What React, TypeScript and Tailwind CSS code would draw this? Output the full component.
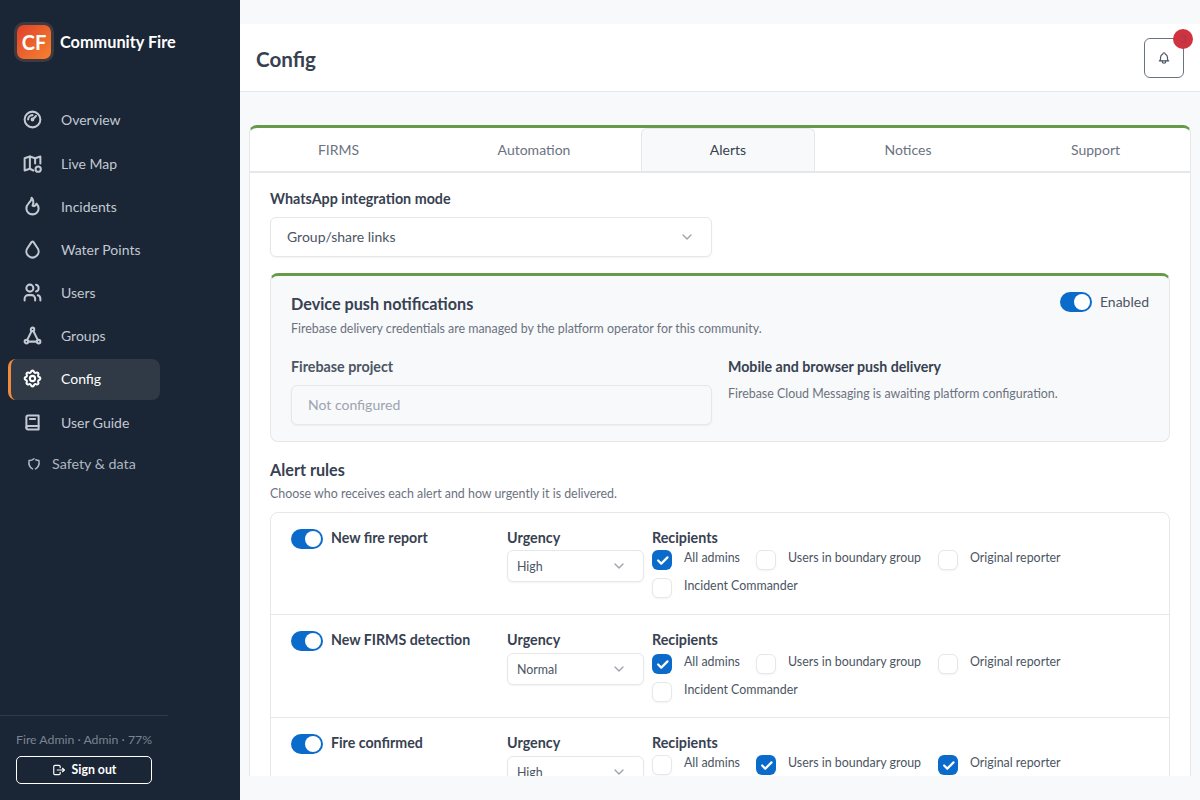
import React from "react";
import { TbGauge, TbFlame, TbDroplet, TbUsers, TbSettings, TbBook2, TbLogout, TbBell, TbChevronDown, TbCheck } from "react-icons/tb";

type IconProps = { className?: string; strokeWidth?: number };

const Triangle = ({ className }: IconProps) => (
  <svg viewBox="0 0 24 24" fill="none" stroke="currentColor" strokeWidth="2.3" strokeLinecap="round" strokeLinejoin="round" className={className}>
    <circle cx="12" cy="5" r="2" />
    <circle cx="5" cy="19" r="2" />
    <circle cx="19" cy="19" r="2" />
    <path d="M7 19h10M6 17l5-10.2M18 17l-5-10.2" />
  </svg>
);

const MapBadge = ({ className }: IconProps) => (
  <svg viewBox="0 0 24 24" fill="none" stroke="currentColor" strokeWidth="2.3" strokeLinecap="round" strokeLinejoin="round" className={className}>
    <path d="M13 20l-4-2-6 2V6l6-2 6 2 6-2v8" />
    <path d="M9 4v14M15 6v6" />
    <circle cx="18.5" cy="18.5" r="3" />
  </svg>
);

const OpenShield = ({ className }: IconProps) => (
  <svg viewBox="0 0 24 24" fill="none" stroke="currentColor" strokeWidth="2.6" strokeLinecap="round" strokeLinejoin="round" className={className}>
    <path d="M15 4.8a12 12 0 0 0 5.5 1.2c1 6.5-1.5 12-6 14.500M9.500 20.500c-4.500-2.500-7-8-6-14.500a12 12 0 0 0 8.500-3" />
  </svg>
);

const nav = [
  { label: "Overview", Icon: TbGauge, h: "h-[46px]" },
  { label: "Live Map", Icon: MapBadge, h: "h-[43px]" },
  { label: "Incidents", Icon: TbFlame, h: "h-[43px]" },
  { label: "Water Points", Icon: TbDroplet, h: "h-[43px]" },
  { label: "Users", Icon: TbUsers, h: "h-[43px]" },
  { label: "Groups", Icon: Triangle, h: "h-[43px]" },
];

const tabs = [
  { t: "FIRMS", w: "w-[177px]" },
  { t: "Automation", w: "w-[214px]" },
  { t: "Alerts", w: "w-[174px]" },
  { t: "Notices", w: "w-[186px]" },
  { t: "Support", w: "w-[189px]" },
];

function Toggle({ cls = "" }: { cls?: string }) {
  return (
    <span className={`flex h-[20px] w-[32px] shrink-0 items-center justify-end rounded-full bg-[#0b6bcb] pr-[2px] ${cls}`}>
      <span className="h-[16px] w-[16px] rounded-full bg-white" />
    </span>
  );
}

function Check({ on, label, w }: { on?: boolean; label: string; w: string }) {
  return (
    <div className={`flex items-start gap-[12px] ${w}`}>
      <span className={`flex h-[20px] w-[20px] shrink-0 items-center justify-center rounded-[6px] ${on ? "bg-[#0b6bcb]" : "border border-[#e5e7eb] bg-white shadow-[0_1px_2px_rgba(0,0,0,0.05)]"}`}>
        {on && <TbCheck className="h-[15px] w-[15px] text-white" strokeWidth={3.5} />}
      </span>
      <span className="text-[12.4px] leading-[16px] text-[#4b5563]">{label}</span>
    </div>
  );
}

function Select({ value, h, w, text, pad }: { value: string; h: string; w: string; text: string; pad: string }) {
  return (
    <div className={`flex items-center justify-between rounded-[6px] border border-[#e5e7eb] bg-white shadow-[0_1px_2px_rgba(0,0,0,0.05)] ${h} ${w} ${pad}`}>
      <span className={`${text} text-[#4b5563]`}>{value}</span>
      <TbChevronDown className="h-[16px] w-[16px] text-[#9ca3af]" />
    </div>
  );
}

function Rule({ title, urgency, checks, cls, selCls, chkCls, last }: { title: string; urgency: string; checks: boolean[]; cls: string; selCls: string; chkCls: string; last?: boolean }) {
  return (
    <div className={`flex pl-[20px] ${cls} ${last ? "" : "border-b border-[#e5e7eb]"}`}>
      <div className="flex w-[216px] shrink-0 items-start gap-[8px]">
        <Toggle />
        <span className="text-[14.2px] font-bold leading-[18px] text-[#374151]">{title}</span>
      </div>
      <div className="w-[145px] shrink-0">
        <div className="text-[14.3px] font-bold leading-[18px] text-[#374151]">Urgency</div>
        <Select value={urgency} h="h-[32px]" w={`w-[137px] ${selCls}`} text="pt-[2px] text-[12.4px]" pad="pl-[9px] pr-[16px]" />
      </div>
      <div className="flex-1">
        <div className="text-[14.3px] font-bold leading-[18px] text-[#374151]">Recipients</div>
        <div className={`flex flex-wrap gap-y-[8px] ${chkCls}`}>
          <Check on={checks[0]} label="All admins" w="w-[104px]" />
          <Check on={checks[1]} label="Users in boundary group" w="w-[182px]" />
          <Check on={checks[2]} label="Original reporter" w="w-[150px]" />
          <Check on={checks[3]} label="Incident Commander" w="w-[200px]" />
        </div>
      </div>
    </div>
  );
}

export default function App() {
  return (
    <div className="flex h-[800px] w-[1200px] overflow-hidden bg-[#f8f9fb] font-['Lato','Noto_Sans',sans-serif]">
      <aside className="flex h-full w-[240px] shrink-0 flex-col bg-[#1a2535]">
        <div className="flex items-center gap-[6px] pl-[14px] pt-[22px]">
          <div className="flex h-[40px] w-[40px] items-center justify-center rounded-[10px] border-[3px] border-[#3d3a40] bg-gradient-to-br from-[#df3f2b] to-[#f5812f] text-[20px] font-bold text-white">CF</div>
          <span className="text-[16.3px] font-bold text-white">Community Fire</span>
        </div>
        <nav className="mt-[34px] w-[160px] pl-[8px]">
          {nav.map(({ label, Icon, h }) => (
            <div key={label} className={`flex items-center pl-[14px] text-[14px] text-[#c2c9d2] ${h}`}>
              <Icon className="h-[21px] w-[21px] shrink-0" strokeWidth={2.3} />
              <span className="ml-[18px]">{label}</span>
            </div>
          ))}
          <div className="mt-[2px] flex h-[41px] items-center rounded-[8px] border-l-[3px] border-[#f08a3c] bg-[#2f3a46] pb-[2px] pl-[11px] text-[14px] text-white">
            <TbSettings className="h-[21px] w-[21px] shrink-0" strokeWidth={2.3} />
            <span className="ml-[18px]">Config</span>
          </div>
          <div className="flex h-[45px] items-center pl-[14px] text-[14px] text-[#c2c9d2]">
            <TbBook2 className="h-[21px] w-[21px] shrink-0" strokeWidth={2.3} />
            <span className="ml-[18px]">User Guide</span>
          </div>
          <div className="flex h-[40px] items-center pb-[2px] pl-[19px] text-[14.3px] text-[#aeb6c0]">
            <OpenShield className="h-[14px] w-[14px] shrink-0" />
            <span className="ml-[11px]">Safety &amp; data</span>
          </div>
        </nav>
        <div className="mt-auto w-[168px] border-t border-[#2f3a48] pb-[16px] pl-[16px] pt-[16px]">
          <div className="text-[12.3px] leading-[16px] text-[#7b8491]">Fire Admin · Admin · 77%</div>
          <div className="mt-[8px] flex h-[28px] w-[136px] items-center justify-center gap-[6px] rounded-[5px] border border-white text-[12.3px] font-bold text-white">
            <TbLogout className="h-[14px] w-[14px]" />
            Sign out
          </div>
        </div>
      </aside>

      <main className="flex h-full min-w-0 flex-1 flex-col py-[24px]">
        <header className="flex h-[68px] shrink-0 items-center justify-between border-b border-[#e5e7eb] bg-white pl-[16px] pr-[16px]">
          <h1 className="pt-[3px] text-[20.6px] font-bold text-[#374151]">Config</h1>
          <div className="relative flex h-[40px] w-[40px] items-center justify-center rounded-[6px] border border-[#6b7280]">
            <TbBell className="h-[14px] w-[14px] text-[#4b5563]" />
            <span className="absolute right-[-10px] top-[-10px] flex h-[20px] w-[20px] items-center justify-center rounded-full bg-[#d0323f] text-[12px] text-[#9a4050]">3</span>
          </div>
        </header>
        <div className="min-h-0 flex-1 overflow-hidden pl-[9px] pr-[9px] pt-[33px]">
          <section className="rounded-[8px] border border-t-[3px] border-[#e5e7eb] border-t-[#659a4a] bg-white">
            <div className="flex h-[45px] border-b-[2px] border-[#e5e7eb]">
              {tabs.map(({ t, w }) => (
                <div key={t} className={`flex shrink-0 items-center justify-center text-[14px] ${w} ${t === "Alerts" ? "rounded-t-[6px] border-x border-t border-[#e5e7eb] bg-[#f8f9fa] pb-[1px] text-[#374151]" : "text-[#6b7280]"}`}>{t}</div>
              ))}
            </div>
            <div className="px-[20px] pt-[16px]">
              <label className="block text-[14.3px] font-bold leading-[20px] text-[#374151]">WhatsApp integration mode</label>
              <Select value="Group/share links" h="h-[40px]" w="w-[442px] mt-[8px]" text="text-[14px] pb-[1px]" pad="pl-[16px] pr-[16px]" />
              <div className="mt-[16px] h-[169px] rounded-[8px] border border-t-[3px] border-[#e5e7eb] border-t-[#659a4a] bg-[#f8f9fa] px-[20px] pt-[17px]">
                <div className="flex items-start justify-between">
                  <div>
                    <div className="text-[16.2px] font-bold leading-[22px] text-[#374151]">Device push notifications</div>
                    <div className="mt-[6px] text-[12.4px] leading-[16px] text-[#6b7280]">Firebase delivery credentials are managed by the platform operator for this community.</div>
                  </div>
                  <div className="-mt-[2px] flex items-center gap-[8px]">
                    <Toggle />
                    <span className="text-[14px] text-[#4b5563]">Enabled</span>
                  </div>
                </div>
                <div className="mt-[20px] flex">
                  <div className="w-[421px]">
                    <div className="text-[14.3px] font-bold leading-[20px] text-[#4b5563]">Firebase project</div>
                    <div className="mt-[8px] flex h-[40px] items-center rounded-[6px] border border-[#e5e7eb] bg-[#f8f9fa] pb-[1px] pl-[16px] text-[14px] text-[#9ca3af] shadow-[0_1px_2px_rgba(0,0,0,0.05)]">Not configured</div>
                  </div>
                  <div className="ml-[16px]">
                    <div className="text-[14.2px] font-bold leading-[20px] text-[#374151]">Mobile and browser push delivery</div>
                    <div className="mt-[9px] text-[12.4px] leading-[16px] text-[#6b7280]">Firebase Cloud Messaging is awaiting platform configuration.</div>
                  </div>
                </div>
              </div>
              <div className="mt-[17px] text-[16.2px] font-bold leading-[22px] text-[#374151]">Alert rules</div>
              <div className="mt-[5px] text-[12.4px] leading-[16px] text-[#6b7280]">Choose who receives each alert and how urgently it is delivered.</div>
              <div className="mt-[10px] rounded-[8px] border border-[#e5e7eb]">
                <Rule title="New fire report" urgency="High" checks={[true, false, false, false]} cls="h-[102px] pt-[16px]" selCls="mt-[3px]" chkCls="mt-[3px]" />
                <Rule title="New FIRMS detection" urgency="Normal" checks={[true, false, false, false]} cls="h-[103px] pt-[16px]" selCls="mt-[4px]" chkCls="mt-[5px]" />
                <Rule title="Fire confirmed" urgency="High" checks={[false, true, true, false]} cls="h-[103px] pt-[16px]" selCls="mt-[4px]" chkCls="mt-[3px]" last />
              </div>
            </div>
          </section>
        </div>
      </main>
    </div>
  );
}
